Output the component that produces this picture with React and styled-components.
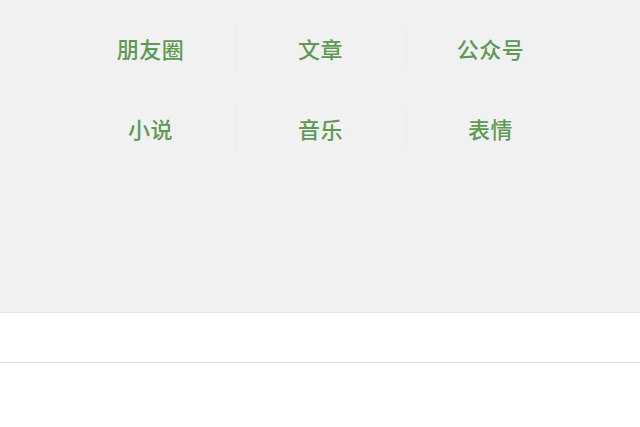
import React from 'react';
import styled, { createGlobalStyle } from 'styled-components';

const Global = createGlobalStyle`
  html, body {
    margin: 0;
    padding: 0;
    background: #ffffff;
  }
  body {
    font-family: "Noto Sans CJK SC", "Noto Sans", sans-serif;
  }
`;

const entries = [
  ['朋友圈', '文章', '公众号'],
  ['小说', '音乐', '表情'],
];

function App() {
  return (
    <Page>
      <Global />
      <Discover>
        <Grid>
          {entries.map((row, r) => (
            <Row key={r}>
              {row.map((label, i) => (
                <Cell key={label} divided={i > 0}>
                  <Label>{label}</Label>
                </Cell>
              ))}
            </Row>
          ))}
        </Grid>
      </Discover>
      <Band />
      <Rest />
    </Page>
  );
}

const Page = styled.div`
  width: 640px;
  height: 427px;
  overflow: hidden;
  display: flex;
  flex-direction: column;
`;

const Discover = styled.div`
  height: 313px;
  background: #f2f1f2;
  border-bottom: 1px solid #e3e3e5;
  box-sizing: border-box;
  padding-top: 8px;
`;

const Grid = styled.div`
  width: 510px;
  margin: 0 auto;
  display: flex;
  flex-direction: column;
`;

const Row = styled.div`
  display: grid;
  grid-template-columns: repeat(3, 1fr);
  height: 80px;
  align-items: center;
`;

const Cell = styled.div`
  height: 40px;
  display: flex;
  align-items: center;
  justify-content: center;
  border-left: 1px solid ${props => (props.divided ? '#ebeaeb' : 'transparent')};
`;

const Label = styled.span`
  font-size: 22px;
  font-weight: 500;
  line-height: 1;
  color: #5e9a53;
  letter-spacing: 0.5px;
`;

const Band = styled.div`
  height: 49px;
  background: #ffffff;
  border-bottom: 1px solid #e2e2e4;
`;

const Rest = styled.div`
  flex: 1;
  background: #ffffff;
`;

export default App;
